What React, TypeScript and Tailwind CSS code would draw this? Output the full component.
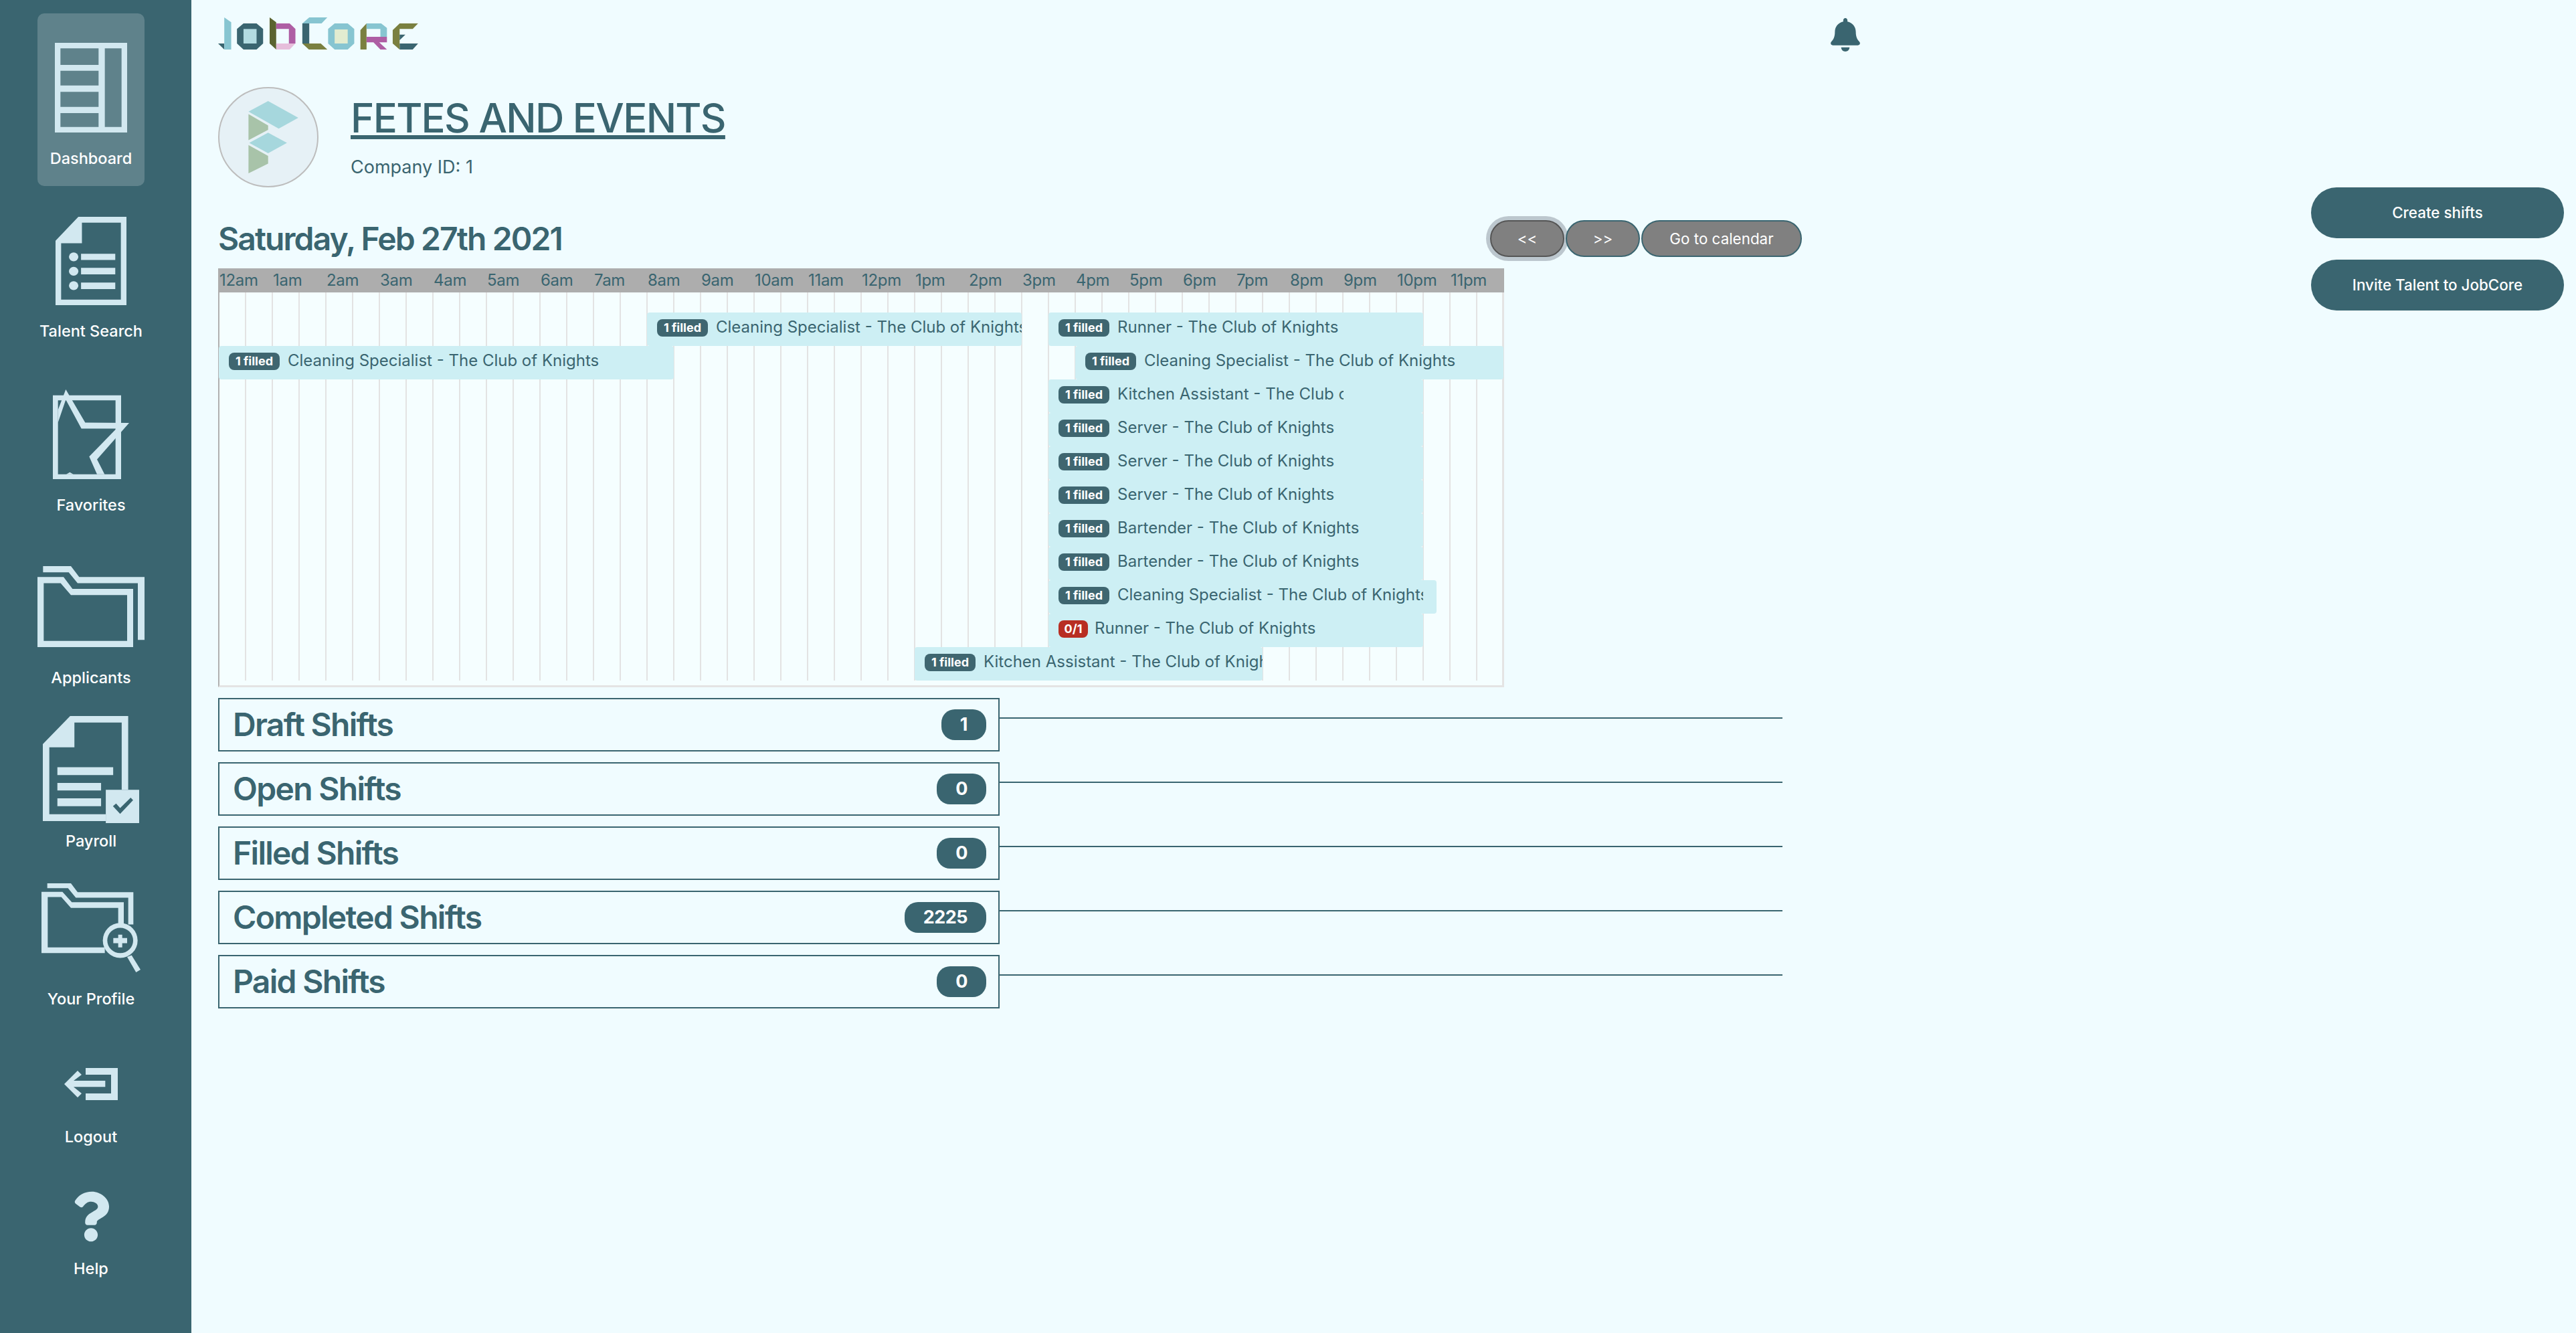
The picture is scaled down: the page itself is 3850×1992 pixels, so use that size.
import type { ReactNode } from "react";
import { FaBell, FaQuestion } from "react-icons/fa";

const ink = "#d2e8f0";
const side = "#3a6570";

function IconDashboard() {
  return (
    <svg viewBox="246 125 324 263" preserveAspectRatio="none" className="h-[134px] w-[108px]">
      <path
        fill={ink}
        fillRule="evenodd"
        d="M246 125H570V388H246ZM271 141V190H442V141ZM271 207V250H442V207ZM271 269V313H442V269ZM271 331V372H442V331ZM470 141V372H545V141Z"
      />
    </svg>
  );
}

function IconTalent() {
  return (
    <svg viewBox="253 635 317 258" preserveAspectRatio="none" className="h-[132px] w-[106px]">
      <path
        fill={ink}
        fillRule="evenodd"
        d="M355 635H570V893H253V705ZM371 652V712H278V877H545V652Z"
      />
      <path fill={ink} d="M367 743H520V761H367ZM367 784H520V803H367ZM367 827H520V846H367Z" />
      <ellipse cx="334" cy="752" rx="21" ry="13" fill={ink} />
      <ellipse cx="334" cy="794" rx="21" ry="13" fill={ink} />
      <ellipse cx="334" cy="836" rx="21" ry="13" fill={ink} />
    </svg>
  );
}

function IconFavorites() {
  return (
    <svg viewBox="240 1140 342 263" preserveAspectRatio="none" className="h-[134px] w-[114px]">
      <path fill={ink} fillRule="evenodd" d="M240 1157H546V1403H240ZM263 1172V1389H521V1172Z" />
      <path
        fill={ink}
        d="M298 1140L385 1237L582 1238L438 1345L472 1389H438L403 1337L525 1255H368L298 1170L263 1237V1200Z"
      />
      <path fill={ink} d="M300 1389L316 1383L332 1389Z" />
    </svg>
  );
}

function IconApplicants() {
  return (
    <svg viewBox="168 90 480 238" preserveAspectRatio="none" className="h-[121px] w-[160px]">
      <path
        fill={ink}
        fillRule="evenodd"
        d="M168 122H285L325 157H597V328H168ZM196 140V310H570V175H318L272 140Z"
      />
      <path fill={ink} d="M193 90H318L355 122H648V307H618V140H348L308 108H193Z" />
    </svg>
  );
}

function IconPayroll() {
  return (
    <svg viewBox="193 530 430 312" preserveAspectRatio="none" className="h-[160px] w-[144px]">
      <path
        fill={ink}
        fillRule="evenodd"
        d="M315 530H574V745H474V836H193V612ZM334 549V621H222V816H474V745H545V549Z"
      />
      <path fill={ink} d="M258 679H507V702H258ZM258 725H453V747H258ZM258 770H453V793H258Z" />
      <path fill={ink} d="M474 745H623V842H474Z" />
      <path fill={side} d="M506 793L520 785L538 798L585 768L596 775L538 815Z" />
    </svg>
  );
}

function IconProfile() {
  return (
    <svg viewBox="186 1020 444 260" preserveAspectRatio="none" className="h-[133px] w-[148px]">
      <path
        fill={ink}
        d="M186 1045H280L322 1075H555V1140H530V1092H318L275 1060H214V1207H470V1224H186Z"
      />
      <path fill={ink} d="M212 1020H318L348 1046H598V1140H575V1062H340L305 1034H212Z" />
      <ellipse cx="539" cy="1187" rx="78" ry="51" fill={ink} />
      <ellipse cx="539" cy="1187" rx="58" ry="37" fill={side} />
      <path fill={ink} d="M508 1180H530V1170H548V1180H570V1195H548V1207H530V1195H508Z" />
      <path fill={ink} d="M570 1235L590 1230L630 1272L610 1280Z" />
    </svg>
  );
}

function IconLogout() {
  return (
    <svg viewBox="288 108 240 144" className="h-[48px] w-[80px]">
      <path fill={ink} d="M384 108H528V252H384V222H498V138H384Z" />
      <path fill={ink} d="M288 180L348 120L366 138L330 165H472V193H330L366 222L348 240Z" />
    </svg>
  );
}

const navItems: { label: string; icon: ReactNode; outer: string; gap: string }[] = [
  { label: "Talent Search", icon: <IconTalent />, outer: "mt-[46px]", gap: "mt-[24px]" },
  { label: "Favorites", icon: <IconFavorites />, outer: "mt-[72px]", gap: "mt-[24px]" },
  { label: "Applicants", icon: <IconApplicants />, outer: "mt-[76px]", gap: "mt-[31px]" },
  { label: "Payroll", icon: <IconPayroll />, outer: "mt-[42px]", gap: "mt-[12px]" },
  { label: "Your Profile", icon: <IconProfile />, outer: "mt-[48px]", gap: "mt-[25px]" },
  { label: "Logout", icon: <IconLogout />, outer: "mt-[88px]", gap: "mt-[40px]" },
  {
    label: "Help",
    icon: <FaQuestion className="h-[80px] w-[56px] text-[#d2e8f0]" />,
    outer: "mt-[64px]",
    gap: "mt-[23px]",
  },
];

function Sidebar() {
  return (
    <aside className="flex min-h-screen w-[286px] shrink-0 flex-col items-center bg-[#3a6570] pt-[20px] pr-[14px] text-[23.5px] font-medium leading-[30px] text-white">
      <div className="flex h-[258px] w-[160px] flex-col items-center rounded-[10px] bg-[#5f828b] pt-[44px]">
        <IconDashboard />
        <span className="mt-[24px]">Dashboard</span>
      </div>
      {navItems.map((item) => (
        <div key={item.label} className={`flex flex-col items-center ${item.outer}`}>
          {item.icon}
          <span className={item.gap}>{item.label}</span>
        </div>
      ))}
    </aside>
  );
}

function Logo() {
  return (
    <svg viewBox="46 78 522 144" preserveAspectRatio="none" className="h-[48px] w-[300px]">
      <path fill="#3a6570" d="M46 195H62V222Z" />
      <path fill="#87c5d1" d="M62 78L80 100V222H62Z" />
      <path fill="#3a6570" d="M112 105H146L163 130V195L146 222H112L95 195V130Z" />
      <path fill="#b2dbe1" d="M112 130H146V195H112Z" />
      <path fill="#5b6330" d="M180 78L197 100V222L180 195Z" />
      <path fill="#ae5ea4" d="M197 105H232L247 130V195H230V130H197Z" />
      <path fill="#e6bedb" d="M197 195H247L232 222H197Z" />
      <path fill="#87c5d1" d="M265 105L283 78H330L315 105Z" />
      <path fill="#3a6570" d="M265 105H283V195H265Z" />
      <path fill="#7a8040" d="M265 195H313L330 222H282Z" />
      <path fill="#87c5d1" d="M349 105H383L400 130V195L383 222H349L332 195V130Z" />
      <path fill="#e2ecd0" d="M349 132H383V195H349Z" />
      <path fill="#7a8040" d="M416 135L432 105V222H416Z" />
      <path fill="#87c5d1" d="M432 105H470L485 125V165H468V130H432Z" />
      <path fill="#ae5ea4" d="M432 165H485V190H465L485 222H468L450 190H432Z" />
      <path fill="#7a8040" d="M500 135L518 105H566L552 130H518V195H500Z" />
      <path fill="#3a6570" d="M518 155H533L518 180Z" />
      <path fill="#3a6570" d="M518 195H566L552 222H518Z" />
      <path fill="#7a8040" d="M500 195H518V222Z" />
    </svg>
  );
}

function CompanyAvatar() {
  return (
    <div className="h-[150px] w-[150px] shrink-0 rounded-full border-2 border-[#bdbdbd] bg-[#e6f1f6]">
      <svg viewBox="46 390 259 448" preserveAspectRatio="none" className="h-full w-full">
        <path fill="#a6d7dd" d="M175 448L255 525L203 575L123 497Z" />
        <path fill="#a6d7dd" d="M175 593L225 640L175 688L125 640Z" />
        <path fill="#a8c3a9" d="M123 508L175 560V580L123 628Z" />
        <path fill="#a8c3a9" d="M123 650L175 700V735L123 780Z" />
      </svg>
    </div>
  );
}

type Bar = {
  row: number;
  start: number;
  end: number;
  role: string;
  badge?: string;
  clip?: string;
};

// start and end are counted in half hours
const bars: Bar[] = [
  { row: 1, start: 16, end: 30, role: "Cleaning Specialist" },
  { row: 1, start: 31, end: 45, role: "Runner" },
  { row: 2, start: 0, end: 17, role: "Cleaning Specialist" },
  { row: 2, start: 32, end: 48, role: "Cleaning Specialist" },
  { row: 3, start: 31, end: 45, role: "Kitchen Assistant", clip: "w-[441px]" },
  { row: 4, start: 31, end: 45, role: "Server" },
  { row: 5, start: 31, end: 45, role: "Server" },
  { row: 6, start: 31, end: 45, role: "Server" },
  { row: 7, start: 31, end: 45, role: "Bartender" },
  { row: 8, start: 31, end: 45, role: "Bartender" },
  { row: 9, start: 31, end: 45.5, role: "Cleaning Specialist", clip: "w-[560px]" },
  { row: 10, start: 31, end: 45, role: "Runner", badge: "0/1" },
  { row: 11, start: 26, end: 39, role: "Kitchen Assistant" },
];

const hours = [
  "12am", "1am", "2am", "3am", "4am", "5am", "6am", "7am", "8am", "9am", "10am", "11am",
  "12pm", "1pm", "2pm", "3pm", "4pm", "5pm", "6pm", "7pm", "8pm", "9pm", "10pm", "11pm",
];

function Timeline() {
  return (
    <div className="mt-[17px] w-[1922px]">
      <div className="flex h-[36px] items-center bg-[#adadad] pl-[2px] text-[24px] leading-[36px] tracking-[-0.3px] text-[#3a6570]">
        {hours.map((h) => (
          <span key={h} className="w-[80px] shrink-0">
            {h}
          </span>
        ))}
      </div>
      <div className="h-[590px] border-r-[3px] border-b-[3px] border-l-2 border-r-[#e4e4e4] border-b-[#e4e4e4] border-l-[#b0b0b0] bg-[#f5feff]">
        <div className="h-[580px] bg-[linear-gradient(to_right,#e3e3e3_2px,transparent_2px)] bg-[length:40px_100%] bg-[position:-2px_0] pt-[30px]">
          <div className="-ml-[1px] grid grid-cols-[repeat(96,20px)] auto-rows-[50px]">
            {bars.map((bar) => (
              <div
                key={`${bar.row}-${bar.start}`}
                className="overflow-x-clip rounded-[4px] bg-[#cdeff4] pt-[10px] text-[24px] leading-[26px] text-[#3a6570]"
                style={{ gridRow: bar.row, gridColumn: `${bar.start * 2 + 1} / ${bar.end * 2 + 1}` }}
              >
                <div className={`flex h-[26px] items-start overflow-x-clip whitespace-nowrap pl-[15px] ${bar.clip ?? ""}`}>
                  {bar.badge ? (
                    <span className="mr-[10px] flex h-[26px] w-[44px] shrink-0 items-center justify-center rounded-[8px] bg-[#b82e23] text-[18px] font-bold text-white">
                      {bar.badge}
                    </span>
                  ) : (
                    <span className="mr-[12px] flex h-[26px] w-[76px] shrink-0 items-center justify-center rounded-[8px] bg-[#3f6670] text-[18px] font-bold text-white">
                      1 filled
                    </span>
                  )}
                  <span className="-mt-[1px]">{bar.role} - The Club of Knights</span>
                </div>
              </div>
            ))}
          </div>
        </div>
      </div>
    </div>
  );
}

const shiftGroups = [
  { title: "Draft Shifts", count: 1 },
  { title: "Open Shifts", count: 0 },
  { title: "Filled Shifts", count: 0 },
  { title: "Completed Shifts", count: 2225 },
  { title: "Paid Shifts", count: 0 },
];

function ShiftGroups() {
  return (
    <div className="mt-[16px] flex flex-col gap-[16px]">
      {shiftGroups.map((group) => (
        <div key={group.title} className="flex items-start">
          <div className="flex h-[80px] w-[1168px] items-center justify-between border-2 border-[#3a6570] pr-[18px] pl-[20px]">
            <span className="text-[48px] font-semibold leading-none tracking-[-1.7px] text-[#3a6570]">{group.title}</span>
            <span className="flex h-[46px] items-center rounded-[20px] bg-[#3a6570] px-[28px] text-[27px] font-bold tracking-[-0.5px] text-white">
              {group.count}
            </span>
          </div>
          <div className="mt-[29px] h-[2px] w-[1170px] bg-[#3a6570]" />
        </div>
      ))}
    </div>
  );
}

export default function App() {
  return (
    <div className="flex min-h-screen bg-[#f0fcff] font-['Inter',sans-serif] text-[#3a6570]">
      <Sidebar />
      <main className="flex flex-1 justify-between pl-[40px]">
        <div className="w-[2454px]">
          <header className="flex h-[74px] items-start justify-between pt-[26px]">
            <Logo />
            <FaBell className="mt-[1px] h-[50px] w-[44px] text-[#3a6570]" />
          </header>
          <section className="mt-[56px] flex items-start">
            <CompanyAvatar />
            <div className="ml-[48px] pt-[10px]">
              <h1 className="text-[60px] font-medium leading-[72px] tracking-[-1.7px] underline decoration-[6px] underline-offset-[4px]">
                FETES AND EVENTS
              </h1>
              <p className="mt-[22px] text-[27px] leading-[32px]">Company ID: 1</p>
            </div>
          </section>
          <div className="mt-[49px] flex w-[2367px] items-center justify-between">
            <h2 className="text-[48px] font-semibold leading-none tracking-[-1.9px]">Saturday, Feb 27th 2021</h2>
            <div className="flex gap-[2px] text-[22.4px] text-white">
              <button className="h-[55px] w-[111px] rounded-full border-2 border-[#555555] bg-[#808080] ring-[6px] ring-[#bcc7ce]">
                {"<<"}
              </button>
              <button className="h-[55px] w-[111px] rounded-full border-2 border-[#3a6570] bg-[#808080]">{">>"}</button>
              <button className="h-[55px] w-[240px] rounded-full border-2 border-[#3a6570] bg-[#808080]">
                Go to calendar
              </button>
            </div>
          </div>
          <Timeline />
          <ShiftGroups />
        </div>
        <div className="mr-[18px] flex w-[378px] flex-col gap-[32px] pt-[280px] text-[22.4px] font-medium text-white">
          <button className="h-[76px] rounded-full bg-[#3a6570]">Create shifts</button>
          <button className="h-[76px] rounded-full bg-[#3a6570]">Invite Talent to JobCore</button>
        </div>
      </main>
    </div>
  );
}
